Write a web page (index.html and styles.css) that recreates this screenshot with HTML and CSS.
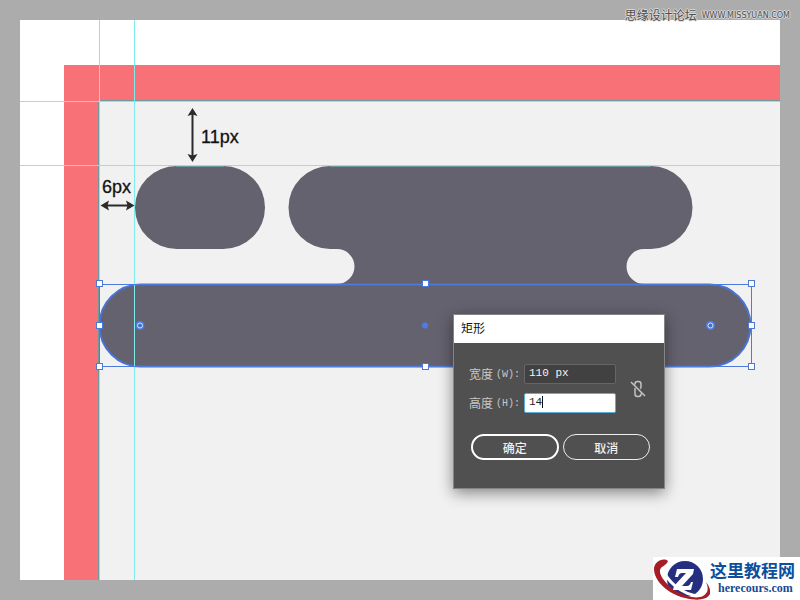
FILE: index.html
```html
<!DOCTYPE html>
<html lang="zh-CN">
<head>
<meta charset="utf-8">
<title>矩形</title>
<link rel="stylesheet" href="styles.css">
</head>
<body>
<main class="canvas">
  <svg class="artwork" viewBox="20 20 760 560" preserveAspectRatio="xMinYMin slice" role="img" aria-label="画板">
    <rect class="border" x="64" y="65" width="716" height="515"/>
    <rect class="board" x="99" y="101" width="681" height="479"/>
    <g class="shape">
      <rect x="135" y="166" width="130" height="83" rx="41.5"/>
      <path d="M330 166H651A41.5 41.5 0 0 1 651 249H644A17.5 17.5 0 0 0 644 284H337A17.5 17.5 0 0 0 337 249H330A41.5 41.5 0 0 1 330 166Z"/>
      <rect class="selected" x="99.5" y="284.5" width="651" height="82" rx="41"/>
    </g>
    <g class="edge">
      <rect x="99" y="100" width="681" height="1"/>
      <rect x="98" y="101" width="1" height="479"/>
      <rect x="176" y="166" width="48" height="1"/>
      <rect x="330" y="166" width="321" height="1"/>
    </g>
    <g class="guide">
      <rect x="99" y="20" width="1" height="560"/>
      <rect x="134" y="20" width="1" height="560"/>
      <rect x="20" y="101" width="760" height="1"/>
      <rect x="20" y="165" width="760" height="1"/>
    </g>
    <rect class="bounds" x="99.5" y="284.5" width="652" height="82"/>
    <g class="handle">
      <rect x="96.5" y="280.5" width="6" height="6"/>
      <rect x="422.5" y="280.5" width="6" height="6"/>
      <rect x="748.5" y="280.5" width="6" height="6"/>
      <rect x="96.5" y="322.5" width="6" height="6"/>
      <rect x="748.5" y="322.5" width="6" height="6"/>
      <rect x="96.5" y="363.5" width="6" height="6"/>
      <rect x="422.5" y="363.5" width="6" height="6"/>
      <rect x="748.5" y="363.5" width="6" height="6"/>
    </g>
    <g class="dot">
      <circle cx="425" cy="325.5" r="3"/>
      <circle cx="140" cy="325.5" r="4.5"/>
      <circle cx="710.5" cy="325.5" r="4.5"/>
    </g>
    <g class="ring">
      <circle cx="140" cy="325.5" r="2.5"/>
      <circle cx="710.5" cy="325.5" r="2.5"/>
    </g>
    <g class="arrow">
      <path class="shaft" d="M192.5 112V158M105 205.5H130"/>
      <path d="M192.5 108L197.5 116L192.5 114.5L187.5 116ZM192.5 162L197.5 154L192.5 155.5L187.5 154ZM100.5 205.5L109 200.5L107.5 205.5L109 210.5ZM134.5 205.5L126 200.5L127.5 205.5L126 210.5Z"/>
    </g>
    <text class="measure" x="201" y="143">11px</text>
    <text class="measure" x="102" y="193">6px</text>
  </svg>

  <form class="dialog" aria-labelledby="dialog-title">
    <h1 class="dialog-title" id="dialog-title">矩形</h1>
    <div class="dialog-body">
      <div class="size">
        <div class="fields">
          <label for="w">宽度<span>(W):</span></label>
          <input id="w" type="text" value="110 px">
          <label for="h">高度<span>(H):</span></label>
          <div class="active">
            <input id="h" type="text" value="14">
            <span class="caret"></span>
          </div>
        </div>
        <button class="link" type="button" aria-label="约束宽度和高度比例">
          <svg width="16" height="18" viewBox="0 0 16 18">
            <path d="M5 4.500V4Q5 1.500 7.500 1.500H8.500Q11 1.500 11 4V7Q11 8 10 8.500M5 8V14Q5 16.500 7.500 16.500H8.500Q11 16.500 11 14V13.500M1 2L15 16"/>
          </svg>
        </button>
      </div>
      <div class="actions">
        <button class="primary" type="submit">确定</button>
        <button type="button">取消</button>
      </div>
    </div>
  </form>
</main>

<div class="credit"><span>思缘设计论坛</span><span class="credit-url">WWW.MISSYUAN.COM</span></div>

<div class="brand">
  <svg width="57" height="43" viewBox="0 0 57 43" aria-hidden="true">
    <circle class="globe" cx="32" cy="22" r="18"/>
    <path class="trail" d="M10 12C13 22 27 38 47 39"/>
    <path class="orbit" d="M15 4C10 0 1 5 1 12C1 24 15 37 32 41C44 44 54 43 57 37C58 33 56 29 53 25C56 32 55 36 50 39C44 42 34 40 25 35C14 29 6 19 7 13C8 9 13 9 15 4Z"/>
    <path class="mark" d="M24 12H41L40 17L29 29H34Q37 29 38 25H40L38 33H20L21 29L33 16H29Q26 16 25 20H22Z"/>
  </svg>
  <div class="brand-text">
    <span class="brand-name">这里教程网</span>
    <span class="brand-url">herecours.com</span>
  </div>
</div>
</body>
</html>
```
FILE: styles.css
```css
* { box-sizing: border-box; }

body {
  margin: 0;
  padding: 20px;
  min-height: 100vh;
  background: #acacac;
  font-family: "Liberation Sans", "Noto Sans CJK SC", sans-serif;
}

.canvas {
  position: relative;
  height: calc(100vh - 40px);
  overflow: hidden;
  background: #fff;
}

.artwork { display: block; width: 100%; height: 100%; }
.border { fill: #f87176; }
.board { fill: #f1f1f1; }
.shape { fill: #65626f; }
.selected { stroke: #4b72cf; stroke-width: 2; }
.edge { fill: #6f9a9d; }
.guide { fill: #7fecec; }
.bounds { fill: none; stroke: #4d7bdb; }
.handle { fill: #fff; stroke: #4d78d4; }
.dot { fill: #4a7de8; }
.ring { fill: #4a6fc0; stroke: #d5e3ff; }
.arrow { fill: #2b2b2b; }
.shaft { fill: none; stroke: #2b2b2b; stroke-width: 2; }
.measure { font-size: 18px; fill: #111; stroke: #111; stroke-width: 0.3; }

.dialog {
  position: absolute;
  left: 433px;
  top: 294px;
  width: 212px;
  border: 1px solid #858585;
  background: #505050;
  box-shadow: 0 4px 14px rgba(0, 0, 0, 0.45);
}

.dialog-title {
  margin: 0;
  padding: 0 7px;
  background: #fff;
  color: #111;
  font-size: 12px;
  font-weight: 400;
  line-height: 28px;
}

.dialog-body { padding: 20px 14px 28px 15px; }
.size { display: flex; align-items: center; gap: 14px; }

.fields {
  display: grid;
  grid-template-columns: 52px 92px;
  gap: 7px 3px;
  align-items: center;
}

.fields label {
  display: flex;
  gap: 3px;
  padding-top: 2px;
  color: #c8c8c8;
  font-size: 12px;
  line-height: 20px;
  white-space: nowrap;
}
.fields label span { font: 10px/20px "Liberation Mono", monospace; }

.fields input {
  display: block;
  width: 100%;
  height: 20px;
  padding: 0 4px 2px;
  border: 1px solid #666;
  border-radius: 2px;
  background: #414141;
  color: #f3f3f3;
  font: 11px "Liberation Mono", monospace;
  outline: 0;
}

.active { position: relative; }
.active input { background: #fff; border-color: #5caed6; color: #222; }
.caret {
  position: absolute;
  left: 18px;
  top: 3px;
  width: 1px;
  height: 12px;
  background: #111;
}

.link { padding: 0; border: 0; background: none; }
.link svg { display: block; fill: none; stroke: #c4c4c4; stroke-width: 1.5; }

.actions { display: flex; gap: 4px; padding: 20px 0 0 2px; }
.actions button {
  width: 88px;
  height: 26px;
  padding: 0;
  border: 1px solid #eee;
  border-radius: 13px;
  background: none;
  color: #f0f0f0;
  font: 500 12px "Noto Sans CJK SC", sans-serif;
}
.actions .primary { border: 2px solid #fff; }

.credit {
  position: absolute;
  top: 8px;
  right: 10px;
  display: flex;
  align-items: center;
  gap: 5px;
  color: #4d4d4d;
  font-size: 12px;
  line-height: 16px;
  text-shadow: 1px 0 #ddd, -1px 0 #ddd, 0 1px #ddd, 0 -1px #ddd;
}
.credit-url { font: 8px/16px "DejaVu Sans", sans-serif; }

.brand {
  position: absolute;
  right: 0;
  bottom: 0;
  display: flex;
  width: 147px;
  height: 43px;
  background: #fff;
}
.brand svg { flex: none; }
.brand-text { display: flex; flex-direction: column; white-space: nowrap; }
.brand-name {
  color: #0d4f9c;
  font: 700 17px/25px "Noto Sans CJK SC", sans-serif;
}
.brand-url {
  padding-left: 8px;
  color: #174a91;
  font: 700 12px/12px "Liberation Serif", serif;
}
.globe { fill: #242f80; }
.orbit { fill: #a51d26; }
.trail { fill: none; stroke: #fff; stroke-width: 3; }
.mark { fill: #fff; }
```
